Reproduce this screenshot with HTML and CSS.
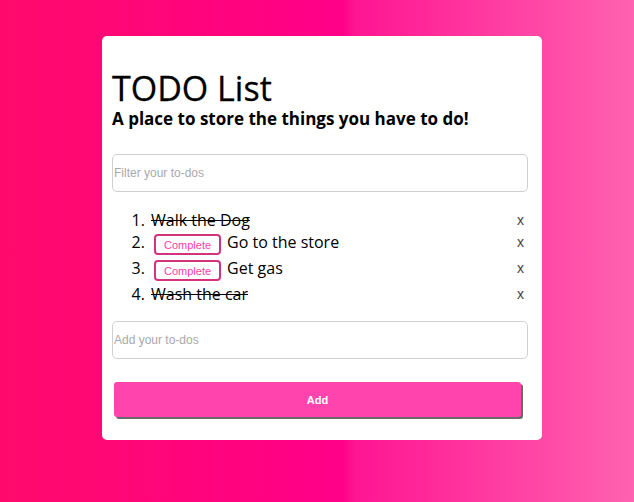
FILE: index.html
```html
<!DOCTYPE html>
<html>
<head>
<meta charset="utf-8">
<link rel="stylesheet" href="styles.css">
</head>
<body>
<main class="card">
  <h1 class="title">TODO List</h1>
  <h2 class="subtitle">A place to store the things you have to do!</h2>
  <input class="field filter" type="text" placeholder="Filter your to-dos">
  <ol class="todos">
    <li class="todo"><span class="text done">Walk the Dog</span><button class="remove">x</button></li>
    <li class="todo"><button class="complete">Complete</button><span class="text">Go to the store</span><button class="remove">x</button></li>
    <li class="todo"><button class="complete">Complete</button><span class="text">Get gas</span><button class="remove">x</button></li>
    <li class="todo"><span class="text done">Wash the car</span><button class="remove">x</button></li>
  </ol>
  <input class="field add-field" type="text" placeholder="Add your to-dos">
  <button class="add">Add</button>
</main>
</body>
</html>
```

FILE: styles.css
```css
html, body {
  margin: 0;
  height: 100%;
}
body {
  background: linear-gradient(90deg, #ff0a6c 0%, #ff0088 54%, #ff1592 56%, #ff62b0 100%);
  font-family: "Open Sans", "Noto Sans", sans-serif;
  overflow: hidden;
}
.card {
  box-sizing: border-box;
  margin: 36px 0 0 102px;
  width: 440px;
  height: 404px;
  background: #fff;
  border-radius: 5px;
  padding: 32px 14px 0 10px;
  display: flex;
  flex-direction: column;
}
.title {
  margin: 0;
  font-size: 34px;
  font-weight: 400;
  line-height: 40px;
  color: #000;
  -webkit-text-stroke: 0.3px #000;
}
.subtitle {
  margin: 0;
  font-size: 17px;
  font-weight: 700;
  line-height: 22px;
  color: #000;
}
.field {
  box-sizing: border-box;
  width: 416px;
  height: 38px;
  flex: none;
  border: 1px solid #cfcfcf;
  border-radius: 5px;
  padding: 0 1px;
  font-family: "Liberation Sans", Arial, sans-serif;
  font-size: 12px;
  outline: none;
}
.field::placeholder {
  color: #a9a9a9;
}
.filter {
  margin-top: 24px;
}
.todos {
  margin: 17px 0 0;
  padding: 0 0 0 37px;
  font-size: 16px;
  line-height: 22px;
  color: #000;
}
.todo {
  padding-left: 2px;
}
.done {
  text-decoration: line-through;
}
.complete {
  box-sizing: border-box;
  height: 21px;
  margin: 3px 6px 2px 3px;
  padding: 0 8px;
  border: 2px solid #d2327f;
  border-radius: 4px;
  background: #fff;
  color: #ff40a6;
  font-family: "Liberation Sans", Arial, sans-serif;
  font-size: 11px;
  vertical-align: middle;
}
.remove {
  float: right;
  margin-right: 4px;
  border: 0;
  background: none;
  padding: 0;
  color: #444;
  font-family: "Liberation Sans", Arial, sans-serif;
  font-size: 14px;
  line-height: 22px;
}
.add-field {
  margin-top: 16px;
}
.add {
  margin: 23px 0 0 2px;
  width: 407px;
  height: 35px;
  flex: none;
  border: 0;
  border-radius: 3px;
  background: #ff45ad;
  box-shadow: 2px 2px 0 #6a6a6a;
  color: #fff;
  font-family: "Liberation Sans", Arial, sans-serif;
  font-size: 11px;
  font-weight: 700;
}
```
